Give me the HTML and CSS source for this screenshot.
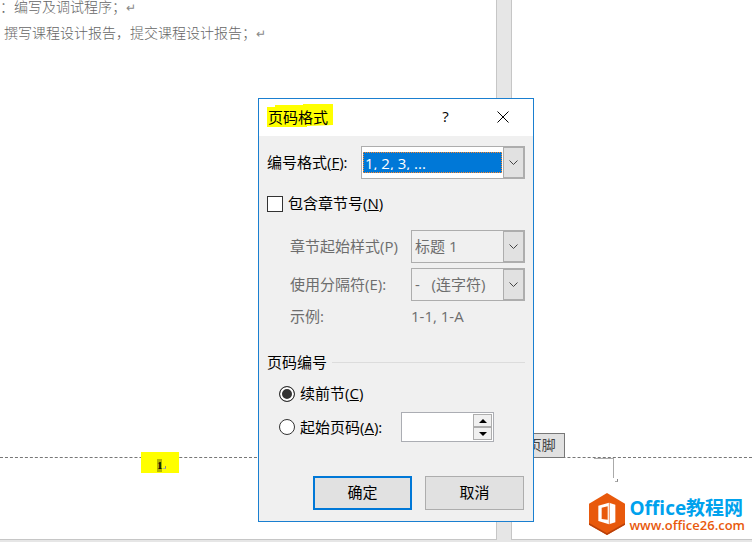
FILE: index.html
```html
<!DOCTYPE html>
<html lang="zh-CN">
<head>
  <meta charset="utf-8">
  <title>页码格式</title>
  <link rel="stylesheet" href="styles.css">
</head>
<body>
  <div class="workspace">
    <div class="sheet first">
      <div class="text">
        <p>：编写及调试程序；<span class="mark">↵</span></p>
        <p class="indent">撰写课程设计报告，提交课程设计报告；<span class="mark">↵</span></p>
      </div>
      <div class="footer">
        <div class="pagenum"><span class="num">1</span><span class="endmark"></span></div>
      </div>
    </div>
    <div class="sheet second">
      <div class="text"></div>
      <div class="footer">
        <div class="footertag">页脚</div>
        <div class="corner"></div>
        <div class="endmark"></div>
      </div>
    </div>
  </div>

  <form class="dialog" onsubmit="return false">
    <div class="titlebar">
      <strong class="title">页码格式</strong>
      <button type="button" class="help" aria-label="帮助">?</button>
      <button type="button" class="close" aria-label="关闭">
        <svg width="12" height="12" viewBox="0 0 12 12"><path d="M0.5 0.5L11.5 11.5M11.5 0.5L0.5 11.5" stroke="#000" fill="none"/></svg>
      </button>
    </div>
    <div class="options">
      <div class="row">
        <label class="name" for="format">编号格式(<u>F</u>):</label>
        <div class="combo active">
          <select id="format"><option>1, 2, 3, ...</option></select>
          <span class="arrow"><svg width="9" height="5" viewBox="0 0 9 5"><path d="M0.5 0.5L4.5 4.5L8.5 0.5" stroke="#444" fill="none"/></svg></span>
        </div>
      </div>
      <div class="row check">
        <input type="checkbox" id="chapter">
        <label for="chapter">包含章节号(<u>N</u>)</label>
      </div>
      <div class="row sub">
        <label class="name" for="style">章节起始样式(P)</label>
        <div class="combo">
          <select id="style" disabled><option>标题 1</option></select>
          <span class="arrow"><svg width="9" height="5" viewBox="0 0 9 5"><path d="M0.5 0.5L4.5 4.5L8.5 0.5" stroke="#444" fill="none"/></svg></span>
        </div>
      </div>
      <div class="row sub next">
        <label class="name" for="separator">使用分隔符(E):</label>
        <div class="combo">
          <select id="separator" disabled><option>-&nbsp;&nbsp; (连字符)</option></select>
          <span class="arrow"><svg width="9" height="5" viewBox="0 0 9 5"><path d="M0.5 0.5L4.5 4.5L8.5 0.5" stroke="#444" fill="none"/></svg></span>
        </div>
      </div>
      <div class="row sub next">
        <span class="name">示例:</span>
        <span>1-1, 1-A</span>
      </div>
      <div class="group">页码编号</div>
      <div class="row radio">
        <input type="radio" name="numbering" id="continue" checked>
        <label for="continue">续前节(<u>C</u>)</label>
      </div>
      <div class="row radio start">
        <input type="radio" name="numbering" id="startat">
        <label for="startat">起始页码(<u>A</u>):</label>
        <div class="spin">
          <input type="text" aria-label="起始页码">
          <div class="steps">
            <button type="button" aria-label="增加"><svg width="8" height="4" viewBox="0 0 8 4"><path d="M0 4L4 0L8 4Z"/></svg></button>
            <button type="button" aria-label="减少"><svg width="8" height="4" viewBox="0 0 8 4"><path d="M0 0L4 4L8 0Z"/></svg></button>
          </div>
        </div>
      </div>
      <div class="buttons">
        <button type="submit" class="ok">确定</button>
        <button type="button">取消</button>
      </div>
    </div>
  </form>

  <div class="brand">
    <svg width="36" height="42" viewBox="0 0 108 126">
      <path fill="#e8590c" d="M54 0L108 32V95L54 126L0 95V32Z"/>
      <path fill="#b8400a" d="M0 90L54 121L108 90V95L54 126L0 95Z"/>
      <path fill="#fff" fill-rule="evenodd" d="M28 38L60 29L79 35V88L60 94L28 84ZM38 44V78L56 80V40Z"/>
      <path stroke="#e8590c" stroke-width="2" d="M61 30V93"/>
    </svg>
    <div>
      <div class="site">Office教程网</div>
      <div class="url">www.office26.com</div>
    </div>
  </div>
</body>
</html>
```

FILE: styles.css
```css
* {
  box-sizing: border-box;
}
body {
  margin: 0;
  font-family: "Open Sans", "Noto Sans CJK SC", sans-serif;
  font-size: 15px;
  line-height: 20px;
  color: #000;
}
.workspace {
  display: flex;
  gap: 14px;
  height: 100vh;
  padding-bottom: 2px;
  background-color: #e6e6e6;
  overflow: hidden;
}
.sheet {
  display: flex;
  flex-direction: column;
  background-color: white;
  border-bottom: 1px solid #c6c6c6;
}
.first {
  flex: 497;
  border-right: 1px solid #c6c6c6;
}
.second {
  flex: 241;
  border-left: 1px solid #c6c6c6;
}
.text {
  flex: 1;
  font-family: "Liberation Sans", "Noto Sans CJK SC", sans-serif;
  font-size: 14px;
  font-weight: 300;
  line-height: 14px;
  color: #666;
}
.text p {
  margin: 0 0 12px;
}
.text .indent {
  padding-left: 4px;
}
.mark {
  font-size: 12px;
  line-height: 0;
  color: #888;
}
.footer {
  position: relative;
  height: 82px;
  border-top: 1px dashed #777;
}
.first .footer {
  z-index: 0;
}
.pagenum {
  position: absolute;
  z-index: -1;
  top: -6px;
  left: 141px;
  display: flex;
  width: 38px;
  height: 21px;
  padding: 7px 0 0 16px;
  background-color: #ff0;
}
.num {
  width: 5px;
  height: 13px;
  background-color: #b5b500;
  font-family: "Liberation Serif", serif;
  font-size: 11px;
  font-weight: bold;
  line-height: 13px;
}
.endmark {
  width: 3px;
  height: 3px;
  border-right: 1px solid #888;
  border-bottom: 1px solid #aaa;
}
.pagenum .endmark {
  margin: 7px 0 0 1px;
}
.second .endmark {
  margin: 1px 0 0 103px;
}
.footertag {
  position: absolute;
  bottom: 100%;
  left: 7px;
  padding: 1px 8px 2px;
  border: 1px solid #777;
  background-color: #e1e1e1;
  font-size: 14px;
  color: #444;
}
.corner {
  width: 20px;
  height: 20px;
  margin-left: 82px;
  border-top: 1px solid #aaa;
  border-right: 1px solid #aaa;
}

/* dialog */
.dialog {
  position: absolute;
  top: 98px;
  left: 258px;
  width: 276px;
  border: 1px solid #1a7fd0;
  background-color: #f0f0f0;
}
.titlebar {
  display: flex;
  align-items: center;
  height: 37px;
  padding: 0 1px 3px 8px;
  background-color: white;
}
.titlebar button {
  border: none;
  background: none;
  padding: 0;
  font: inherit;
}
.title {
  flex: 0 0 66px;
  height: 24px;
  padding-left: 1px;
  font-weight: normal;
  line-height: 26px;
  background-color: #ff0;
  clip-path: polygon(0 3px, 8px 3px, 8px 1px, 36px 1px, 36px 0, 100% 0, 100% 21px, 40px 22px, 40px 23px, 0 23px);
}
.titlebar .help {
  width: 57px;
  margin-left: auto;
}
.titlebar .close {
  width: 58px;
  padding-top: 2px;
  line-height: 0;
}
.options {
  padding: 10px 8px 11px;
}
.row {
  display: flex;
  align-items: center;
}
.name {
  flex: 0 0 94px;
}
.check {
  margin: 14px 0 16px;
}
.sub {
  padding-left: 23px;
  color: #6d6d6d;
}
.sub .name {
  flex-basis: 121px;
}
.next {
  margin-top: 5px;
}
.row label {
  padding-bottom: 1px;
}
.combo {
  display: flex;
  flex: 1;
  min-width: 0;
  height: 33px;
  border: 1px solid #adadad;
}
.combo select {
  flex: 1;
  min-width: 0;
  padding: 0 3px 2px;
  border: none;
  border-radius: 0;
  appearance: none;
  background: none;
  font: inherit;
  color: #6d6d6d;
  opacity: 1;
}
.combo.active {
  background-color: white;
}
.active select {
  margin: 5px 1px;
  padding: 0 1px 2px;
  border: 1px dotted #ff8728;
  background-color: #0078d7;
  color: white;
}
.arrow {
  display: flex;
  align-items: center;
  justify-content: center;
  width: 21px;
  border: 1px solid #adadad;
  background-color: #e1e1e1;
}
input[type=checkbox], input[type=radio] {
  appearance: none;
  width: 16px;
  height: 16px;
  margin: 0 5px 0 0;
  border: 1px solid #333;
  background-color: white;
}
input[type=radio] {
  border-radius: 50%;
}
input[type=checkbox]:checked {
  background-color: #333;
  box-shadow: inset 0 0 0 3px white;
}
input[type=radio]:checked {
  background-color: #333;
  box-shadow: inset 0 0 0 2px white;
}
.group {
  display: flex;
  align-items: center;
  gap: 5px;
  margin: 26px 0 11px;
}
.group::after {
  content: "";
  flex: 1;
  height: 1px;
  background-color: #dcdcdc;
}
.radio {
  padding-left: 12px;
}
.start {
  margin-top: 8px;
}
.spin {
  display: flex;
  width: 93px;
  height: 30px;
  margin-left: auto;
  margin-right: 31px;
  padding: 1px;
  border: 1px solid #abadb3;
  background-color: white;
}
.spin input {
  flex: 1;
  min-width: 0;
  padding: 0 3px;
  border: none;
  font: inherit;
}
.steps {
  display: flex;
  flex-direction: column;
  width: 19px;
}
.steps button {
  display: flex;
  flex: 1;
  align-items: center;
  justify-content: center;
  padding: 0;
  border: 1px solid #adadad;
  background-color: #f0f0f0;
}
.buttons {
  display: flex;
  justify-content: flex-end;
  gap: 13px;
  margin-top: 34px;
  padding-right: 1px;
}
.buttons button {
  width: 99px;
  height: 34px;
  padding-bottom: 3px;
  border: 1px solid #adadad;
  background-color: #e1e1e1;
  font: inherit;
}
.buttons .ok {
  border: 2px solid #0078d7;
}

/* site logo */
.brand {
  position: absolute;
  right: 7px;
  bottom: 7px;
  display: flex;
  gap: 5px;
  font-weight: bold;
}
.site {
  padding-top: 5px;
  font-size: 19px;
  line-height: 20px;
  color: #00a2ed;
}
.url {
  font-size: 13px;
  font-weight: 600;
  line-height: 14px;
  color: #e8590c;
}
```
